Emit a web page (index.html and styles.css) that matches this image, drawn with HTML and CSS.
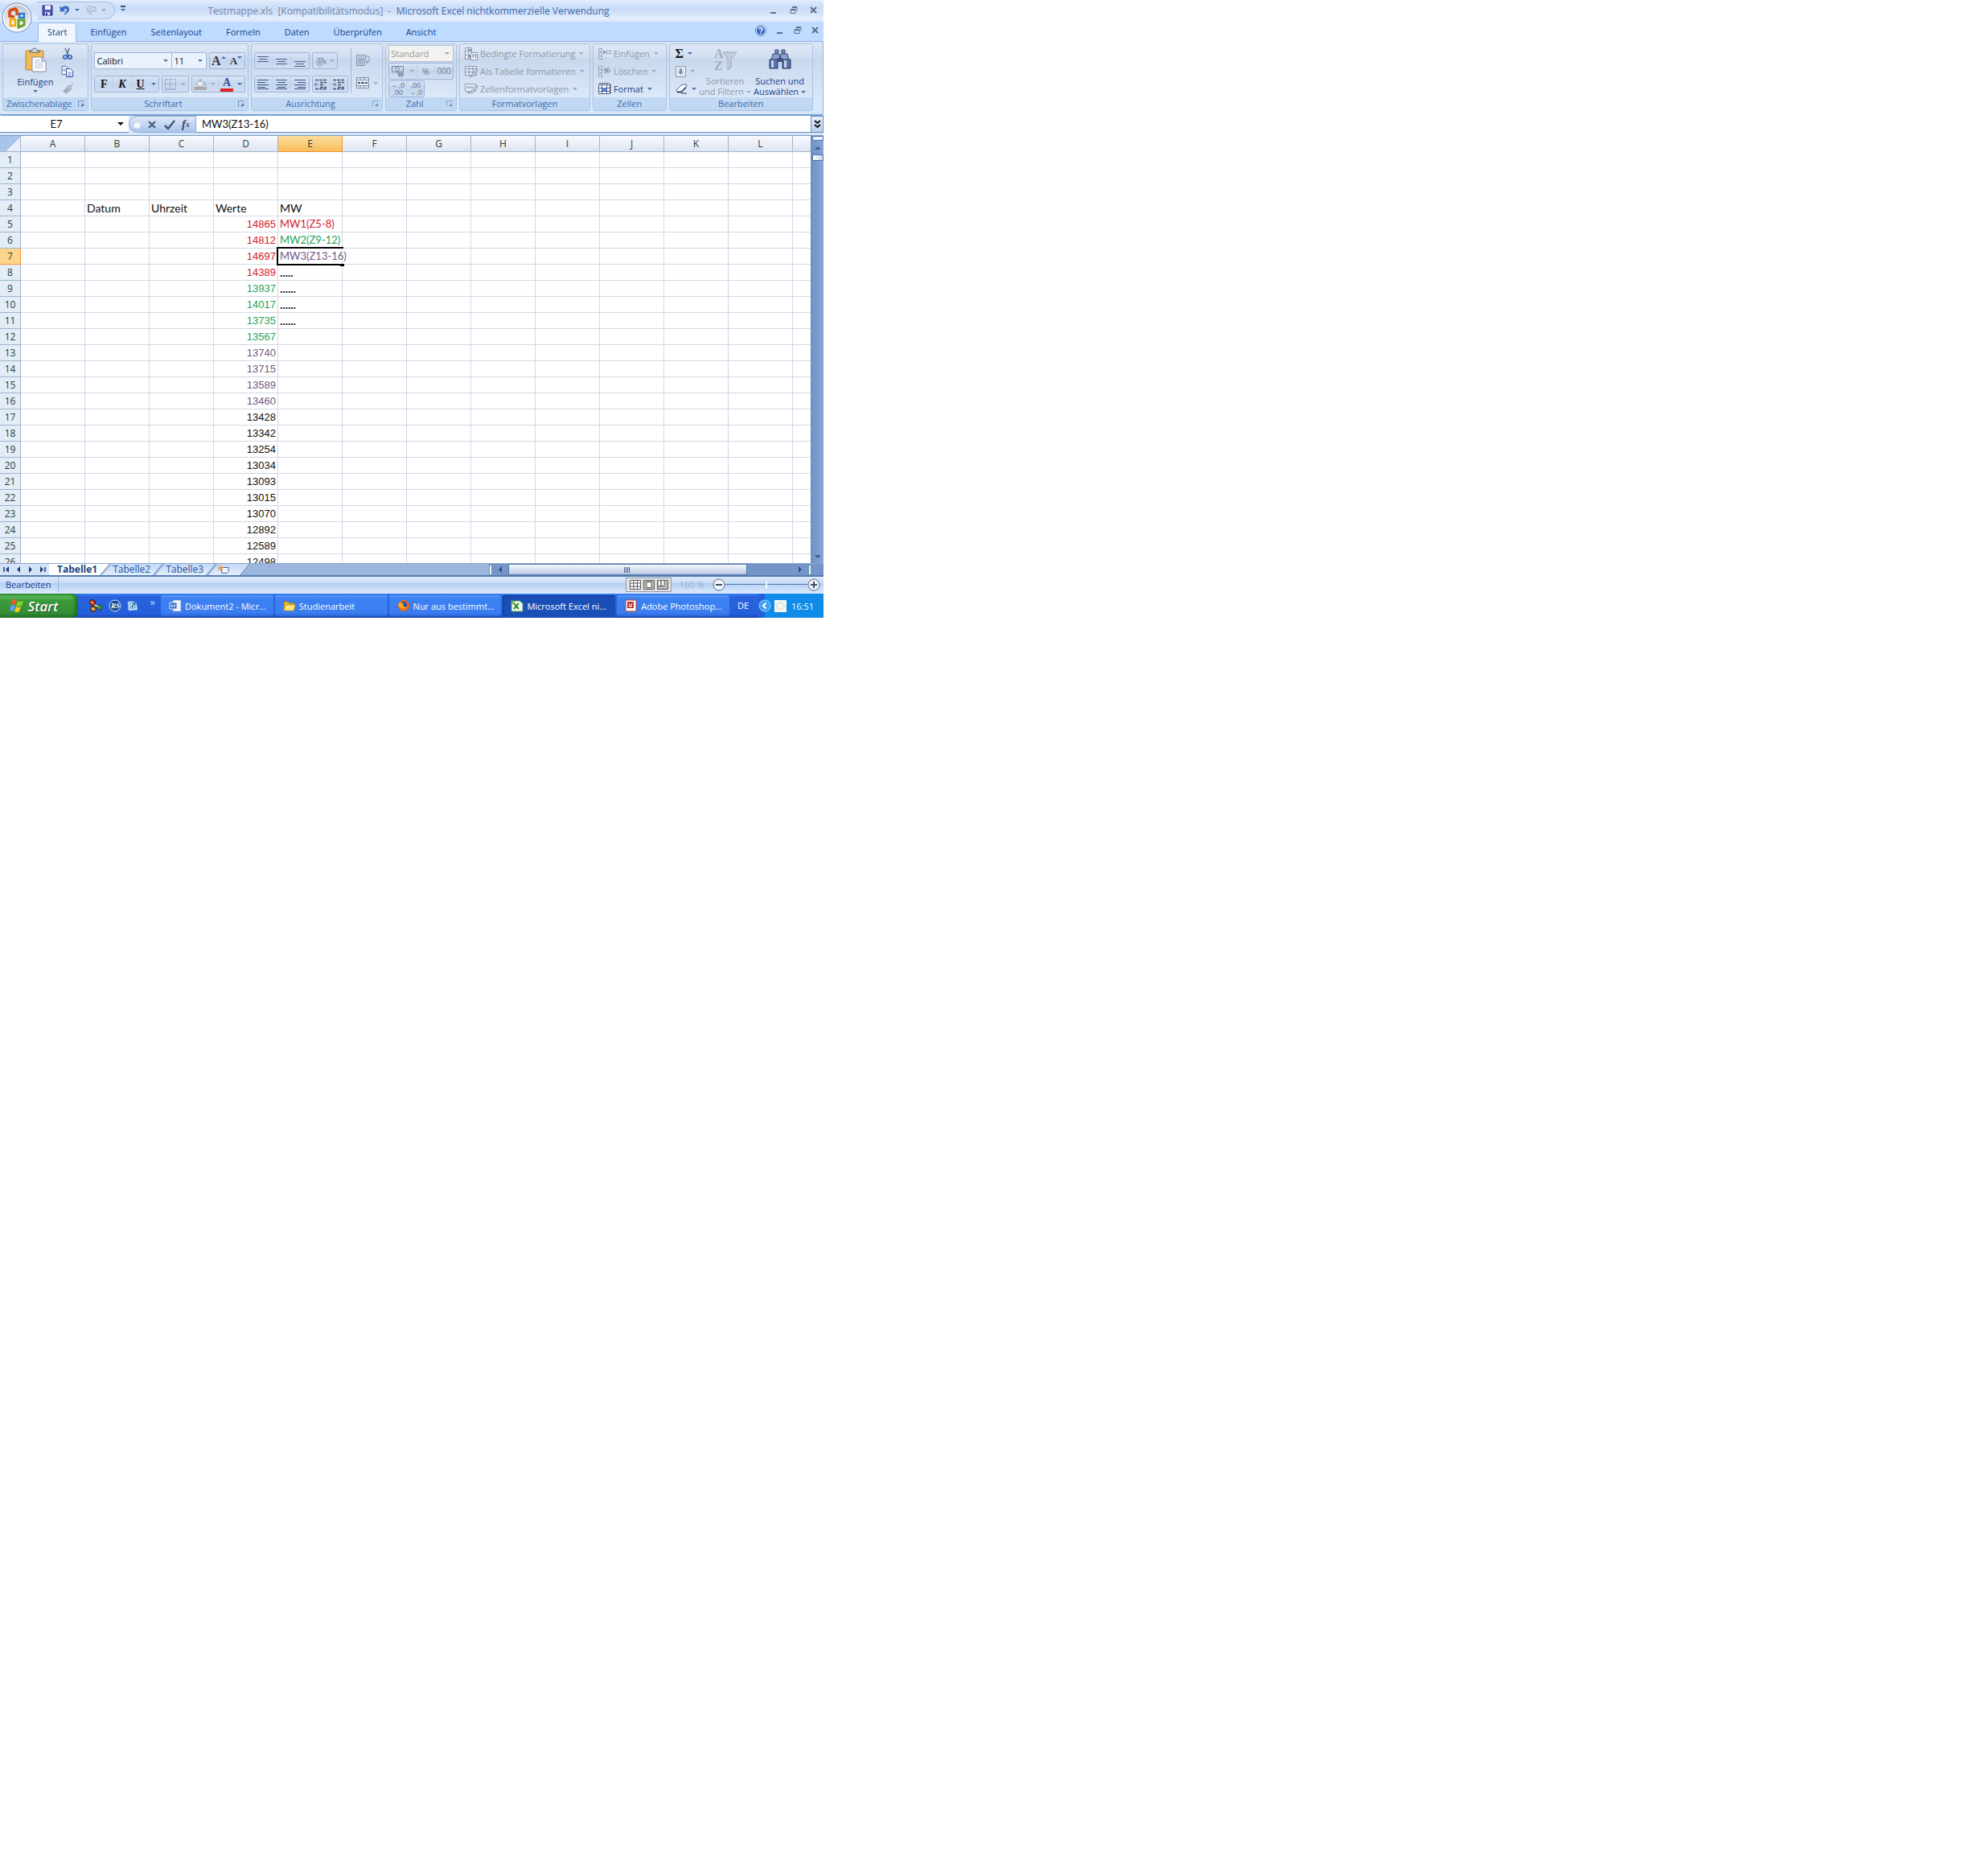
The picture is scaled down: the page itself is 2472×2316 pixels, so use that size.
FILE: index.html
```html
<!DOCTYPE html>
<html lang="de">
<head>
    <meta charset="UTF-8">
    <meta name="viewport" content="width=device-width, initial-scale=1.0">
    <title>Testmappe.xls</title>
    <link rel="stylesheet" href="styles.css">
</head>
<body>
    <div class="desktop">
        <!-- title bar -->
        <header class="titlebar">
            <button class="office" aria-label="Office">
                <svg width="38" height="38" viewBox="0 0 38 38">
                    <defs>
                        <radialGradient id="orb" cx="50%" cy="75%" r="75%">
                            <stop offset="0" stop-color="#ffffff"/>
                            <stop offset=".55" stop-color="#dfe3ea"/>
                            <stop offset="1" stop-color="#b3bccb"/>
                        </radialGradient>
                    </defs>
                    <circle cx="19" cy="19" r="18" fill="url(#orb)" stroke="#7089ad"/>
                    <circle cx="19" cy="19" r="16.5" fill="none" stroke="#fff" stroke-width="1.5"/>
                    <path d="M10 10l7-2 2 2v6M10 10v7l6 1" fill="none" stroke="#d9480f" stroke-width="3.5"/>
                    <rect x="22" y="14" width="6" height="5" fill="none" stroke="#2f7ad1" stroke-width="2.5"/>
                    <rect x="11" y="21" width="6" height="8" fill="none" stroke="#f5a800" stroke-width="2.5"/>
                    <path d="M21 22h7v6l-7 3z" fill="none" stroke="#63a52f" stroke-width="3"/>
                </svg>
            </button>
            <div class="quick">
                <button aria-label="Speichern">
                    <svg width="14" height="14"><path d="M1 1h12v12H1z" fill="#5257b5" stroke="#2b2f80"/><path d="M4 1h7v5H4z" fill="#eef2ff"/><path d="M4 9h6v4H4z" fill="#d5dcf0"/><path d="M5 10h2v3H5z" fill="#2b2f80"/></svg>
                </button>
                <button aria-label="Rückgängig">
                    <svg width="13" height="13"><path d="M1 2v6h6L5 6c3-3 5-1 4 2l-3 4c6-2 8-9 3-10-3-1-5 1-6 2z" fill="#3a6fd0" stroke="#2a54a8" stroke-width=".6"/></svg>
                    <i class="arrow"></i>
                </button>
                <button aria-label="Wiederholen">
                    <svg width="13" height="13"><path d="M12 2v6H6l2-2C5 3 3 5 4 8l3 4C1 10-1 3 4 2c3-1 5 1 6 2z" fill="#cfdaec" stroke="#92a3bf" stroke-width=".8"/></svg>
                    <i class="arrow dim"></i>
                </button>
            </div>
            <button class="more" aria-label="Symbolleiste anpassen"><i class="arrow barred"></i></button>
            <h1 class="title"><span>Testmappe.xls&nbsp; [Kompatibilitätsmodus]&nbsp; -</span>&nbsp; Microsoft Excel nichtkommerzielle Verwendung</h1>
            <div class="winbtns">
                <button aria-label="Minimieren"><svg width="10" height="10"><path d="M1 8h7" stroke="#5b6f8c" stroke-width="2"/></svg></button>
                <button aria-label="Verkleinern"><svg width="10" height="10"><path d="M3 1.5h6v4M1 4.5h6v4H1z" fill="none" stroke="#5b6f8c"/><path d="M1 4h6M3 1h6" stroke="#5b6f8c" stroke-width="2"/></svg></button>
                <button aria-label="Schließen"><svg width="10" height="10"><path d="M1 1l7 7M8 1l-7 7" stroke="#5b6f8c" stroke-width="2"/></svg></button>
            </div>
        </header>

        <nav class="tabs">
            <a href="#" class="active">Start</a>
            <a href="#">Einfügen</a>
            <a href="#">Seitenlayout</a>
            <a href="#">Formeln</a>
            <a href="#">Daten</a>
            <a href="#">Überprüfen</a>
            <a href="#">Ansicht</a>
            <div class="docbtns">
                <button aria-label="Hilfe"><svg width="14" height="14"><circle cx="7" cy="7" r="6" fill="#2f66c8" stroke="#f0f6ff" stroke-width="1.5"/><circle cx="7" cy="7" r="6.6" fill="none" stroke="#2b559c" stroke-width=".7"/><path d="M5 5.5c0-2.500 4-2.500 4 0 0 1.300-2 1.300-2 2.700M7 9.500v1.500" fill="none" stroke="#fff" stroke-width="1.5"/></svg></button>
                <button aria-label="Fenster minimieren"><svg width="10" height="10"><path d="M1 8h7" stroke="#5b6f8c" stroke-width="2"/></svg></button>
                <button aria-label="Fenster verkleinern"><svg width="10" height="10"><path d="M3 1.5h6v4M1 4.5h6v4H1z" fill="none" stroke="#5b6f8c"/><path d="M1 4h6M3 1h6" stroke="#5b6f8c" stroke-width="2"/></svg></button>
                <button aria-label="Fenster schließen"><svg width="10" height="10"><path d="M1 1l7 7M8 1l-7 7" stroke="#5b6f8c" stroke-width="2"/></svg></button>
            </div>
        </nav>

        <!-- ribbon -->
        <div class="ribbon">
            <section class="group clip">
                <div class="body">
                    <button class="big">
                        <svg width="28" height="31"><rect x="2" y="4" width="22" height="24" rx="1" fill="#f0b95a" stroke="#b98431"/><path d="M7 6V4h3c0-4 6-4 6 0h3v2z" fill="#d9dde3" stroke="#59606c"/><path d="M10 12h12l5 5v13H10z" fill="#fff" stroke="#7b8aa5"/><path d="M13 16h7M13 19h11M13 22h11M13 25h11" stroke="#9fb0cc"/><path d="M22 12v5h5" fill="#dce5f5" stroke="#7b8aa5"/></svg>
                        <span>Einfügen</span>
                        <i class="arrow"></i>
                    </button>
                    <div class="stack">
                        <button aria-label="Ausschneiden"><svg width="14" height="15"><path d="M4 0l4 9M9 0L6 9" stroke="#5a6f95" stroke-width="1.5"/><circle cx="4" cy="11" r="2.2" fill="none" stroke="#2f5fb5" stroke-width="1.6"/><circle cx="10" cy="11" r="2.2" fill="none" stroke="#2f5fb5" stroke-width="1.6"/></svg></button>
                        <button aria-label="Kopieren"><svg width="16" height="14"><path d="M1 .5h5l3 3v7H1z" fill="#fff" stroke="#4a66a8"/><path d="M6.5 3.5h5l3 3v7h-8z" fill="#fff" stroke="#2f4f9c"/><path d="M8 8h5M8 10h5M8 12h5M2 4h4M2 6h4" stroke="#6d8bcb"/></svg></button>
                        <button aria-label="Format übertragen"><svg width="16" height="15"><path d="M15 1l-4 3-2-1-2 3 4 4 2-3-1-2z" fill="#b5bcc8" stroke="#8f99aa" stroke-width=".6"/><path d="M7 6l4 4-5 4-4-4z" fill="#a5adba"/></svg></button>
                    </div>
                </div>
                <h2>Zwischenablage<button class="launch" aria-label="Zwischenablage öffnen"></button></h2>
            </section>

            <section class="group font">
                <div class="body rows">
                    <div class="line">
                        <label class="pick name"><select aria-label="Schriftart"><option>Calibri</option></select><i class="arrow"></i></label>
                        <label class="pick size"><select aria-label="Schriftgrad"><option>11</option></select><i class="arrow"></i></label>
                        <div class="set last">
                            <button class="serif grow-a" aria-label="Schrift vergrößern">A<i class="arrow up"></i></button>
                            <button class="serif shrink-a" aria-label="Schrift verkleinern">A<i class="arrow"></i></button>
                        </div>
                    </div>
                    <div class="line">
                        <div class="set fku">
                            <button class="serif">F</button>
                            <button class="serif italic">K</button>
                            <button class="serif under">U</button>
                            <button class="drop" aria-label="Unterstreichen"><i class="arrow"></i></button>
                        </div>
                        <div class="set">
                            <button aria-label="Rahmen"><svg width="14" height="14"><path d="M1 .5h13M1 6.5h13M.5 0v14M6.5 0v14M13.5 0v14" stroke="#7e93b8" stroke-dasharray="1 1"/><path d="M0 13h14" stroke="#7e93b8"/></svg></button>
                            <button class="drop" aria-label="Rahmenart"><i class="arrow dim"></i></button>
                        </div>
                        <div class="set last">
                            <button aria-label="Füllfarbe"><svg width="16" height="16"><path d="M3 7l5-5 5 5-5 4z" fill="#eef2f8" stroke="#8f9bb0"/><path d="M8 5V1M12 6c3 0 3 2 3 4" fill="none" stroke="#8f9bb0"/><path d="M0 11h16v4H0z" fill="#aba9a4"/></svg></button>
                            <button class="drop" aria-label="Füllfarbe wählen"><i class="arrow dim"></i></button>
                            <button class="serif color-a" aria-label="Schriftfarbe">A</button>
                            <button class="drop" aria-label="Schriftfarbe wählen"><i class="arrow"></i></button>
                        </div>
                    </div>
                </div>
                <h2>Schriftart<button class="launch" aria-label="Schriftart öffnen"></button></h2>
            </section>

            <section class="group align">
                <div class="body">
                    <div class="rows">
                        <div class="line">
                            <div class="set three">
                                <button aria-label="Oben"><svg width="14" height="14"><path d="M0 1.5h14M2 4.5h10M0 7.5h14" stroke="#4b5f8a"/></svg></button>
                                <button aria-label="Mitte"><svg width="14" height="14"><path d="M0 4.5h14M2 7.5h10M0 10.5h14" stroke="#4b5f8a"/></svg></button>
                                <button aria-label="Unten"><svg width="14" height="14"><path d="M0 7.5h14M2 10.5h10M0 13.5h14" stroke="#4b5f8a"/></svg></button>
                            </div>
                            <div class="set turn">
                                <button aria-label="Ausrichtung"><svg width="16" height="14"><text x="1" y="11" transform="rotate(-40 5 9)" class="ab">ab</text><path d="M5 14l8-7M9 6l4 1v4" fill="none" stroke="#7f8fab"/></svg><i class="arrow dim"></i></button>
                            </div>
                        </div>
                        <div class="line">
                            <div class="set three">
                                <button aria-label="Linksbündig"><svg width="14" height="14"><path d="M0 1.5h14M0 4.5h10M0 7.5h14M0 10.5h10M0 12.5h14" stroke="#3f5382"/></svg></button>
                                <button aria-label="Zentriert"><svg width="14" height="14"><path d="M0 1.5h14M2 4.5h10M0 7.5h14M2 10.5h10M0 12.5h14" stroke="#3f5382"/></svg></button>
                                <button aria-label="Rechtsbündig"><svg width="14" height="14"><path d="M0 1.5h14M4 4.5h10M0 7.5h14M4 10.5h10M0 12.5h14" stroke="#3f5382"/></svg></button>
                            </div>
                            <div class="set two">
                                <button aria-label="Einzug verkleinern"><svg width="16" height="14"><path d="M1 1.5h14M7 4.5h8M7 7.5h5M7 10.5h8M1 12.5h14" stroke="#46536e" stroke-width="1.5" stroke-dasharray="4 1"/><path d="M0 7h5M2.5 4.5L0 7l2.500 2.500" fill="none" stroke="#5f7198"/></svg></button>
                                <button aria-label="Einzug vergrößern"><svg width="16" height="14"><path d="M1 1.5h14M7 4.5h8M7 7.5h5M7 10.5h8M1 12.5h14" stroke="#46536e" stroke-width="1.5" stroke-dasharray="4 1"/><path d="M0 7h5M2.5 4.5L5 7l-2.500 2.500" fill="none" stroke="#5f7198"/></svg></button>
                            </div>
                        </div>
                    </div>
                    <div class="merge">
                        <button aria-label="Zeilenumbruch"><svg width="17" height="16"><path d="M.5 1.5h11v5H.5zM2 4h8M.5 8.5h10v6H.5zM2 10.5h7M2 12.5h7M12 3h4v7h-4M14 8l-2 2 2 2" fill="none" stroke="#8592aa"/></svg></button>
                        <button aria-label="Verbinden und zentrieren"><svg width="17" height="15"><path d="M.5 .5h15v13H.5zM.5 3.5h15M.5 10.5h15M5 0v3M10 0v3M5 11v3M10 11v3" fill="#eaf0f8" stroke="#7d8ca8"/><path d="M2 7h3M11 7h3M6 7h4" stroke="#46536e" stroke-width="2"/></svg><i class="arrow dim"></i></button>
                    </div>
                </div>
                <h2>Ausrichtung<button class="launch dim" aria-label="Ausrichtung öffnen"></button></h2>
            </section>

            <section class="group number">
                <div class="body">
                    <label class="pick off"><select aria-label="Zahlenformat" disabled><option>Standard</option></select><i class="arrow dim"></i></label>
                    <div class="set">
                        <button aria-label="Währung"><svg width="16" height="15"><path d="M.5 1.5h14v7H.5z" fill="#c9d5e8" stroke="#7686a4"/><circle cx="7" cy="5" r="2.5" fill="none" stroke="#7686a4"/><path d="M8 8h6v2H8zM8 10h6v2H8zM9 12h5v2H9z" fill="#dbe4f1" stroke="#7686a4"/></svg></button>
                        <button class="drop" aria-label="Währung wählen"><i class="arrow dim"></i></button>
                        <button class="gray">%</button>
                        <button class="gray zeros">000</button>
                    </div>
                    <div class="set decimals">
                        <button class="dec"><span>←,0</span><span>,00</span></button>
                        <button class="dec"><span>,00</span><span>→,0</span></button>
                    </div>
                </div>
                <h2>Zahl<button class="launch dim" aria-label="Zahl öffnen"></button></h2>
            </section>

            <section class="group styles">
                <div class="body list">
                    <button disabled><svg width="16" height="16"><path d="M.5 .5h8v14h-8zM.5 4.5h8M.5 9.5h8M4.500 0v15" fill="#e9eef6" stroke="#8b98af"/><path d="M4 2h4v3H4zM4 9h3v4H4z" fill="#8b98af"/><path d="M7.5 6.5h8v9h-8z" fill="#f2f5fa" stroke="#8b98af"/><path d="M9 9h2l-1 4M12 9h2l-1 4" fill="none" stroke="#66748f"/></svg>Bedingte Formatierung<i class="arrow dim"></i></button>
                    <button disabled><svg width="16" height="16"><path d="M.5 1.5h14v11h-14zM.5 4.5h14M.5 8.5h14M5 1v11M10 1v11" fill="#e9eef6" stroke="#8b98af"/><path d="M15 4l-6 7-3 4 5-2 5-6z" fill="#c2cbda" stroke="#8b98af"/></svg>Als Tabelle formatieren<i class="arrow dim"></i></button>
                    <button disabled><svg width="16" height="16"><path d="M.5 2.5h13v9H.5z" fill="#e9eef6" stroke="#8b98af"/><path d="M2 5h9v3H2z" fill="#b6c1d3"/><path d="M15 4l-6 6-6 4 7-1 6-6z" fill="#c2cbda" stroke="#8b98af"/></svg>Zellenformatvorlagen<i class="arrow dim"></i></button>
                </div>
                <h2>Formatvorlagen</h2>
            </section>

            <section class="group cells">
                <div class="body list">
                    <button disabled><svg width="16" height="16"><path d="M.5 1.5h4v3h-4zM.5 6.5h4v3h-4zM.5 11.5h4v3h-4zM10.5 4.5h5v3h-5z" fill="#f2f5fa" stroke="#8b98af"/><path d="M6 6h4M8 4L6 6l2 2" fill="none" stroke="#66748f"/></svg>Einfügen<i class="arrow dim"></i></button>
                    <button disabled><svg width="16" height="16"><path d="M.5 1.5h4v3h-4zM.5 6.5h4v3h-4zM.5 11.5h4v3h-4z" fill="#f2f5fa" stroke="#8b98af"/><path d="M6 6h3M8 3l5 7M13 3L8 10M13 6l2 2" fill="none" stroke="#8b98af" stroke-width="1.5"/></svg>Löschen<i class="arrow dim"></i></button>
                    <button><svg width="16" height="16"><path d="M.5 3.5h14v11h-14zM.5 7.5h14M.5 11.5h14M4.5 3v12M10.5 3v12" fill="#fff" stroke="#4b5f8a"/><path d="M5 7h5v4H5z" fill="#5d86d6"/><path d="M1 1.5h13" stroke="#222" stroke-dasharray="2 1"/><path d="M15 3v12" stroke="#222" stroke-dasharray="2 1"/></svg>Format<i class="arrow"></i></button>
                </div>
                <h2>Zellen</h2>
            </section>

            <section class="group edit">
                <div class="body">
                    <div class="list tools">
                        <button class="serif sigma">Σ<i class="arrow"></i></button>
                        <button aria-label="Füllbereich"><svg width="13" height="14"><path d="M.5 .5h12v13H.5z" fill="#e6ebf3" stroke="#8b98af"/><path d="M5 3h3v4h2l-3.500 4L3 7h2z" fill="#8290a9"/></svg><i class="arrow dim"></i></button>
                        <button aria-label="Löschen"><svg width="15" height="13"><path d="M1 8l7-7h5l1 2-7 7H2z" fill="#fff" stroke="#4b5f8a"/><path d="M2 10.5h5l6-6" fill="none" stroke="#27365c" stroke-width="1.5"/><path d="M7 12h7" stroke="#27365c"/></svg><i class="arrow"></i></button>
                    </div>
                    <button class="big" disabled>
                        <svg width="30" height="30"><text x="1" y="13" class="az">A</text><text x="1" y="28" class="az">Z</text><path d="M12 6h17l-7 8v11l-4 3V14z" fill="#c5ccd8" stroke="#9ba6b8"/></svg>
                        <span>Sortieren</span>
                        <span>und Filtern<i class="arrow dim"></i></span>
                    </button>
                    <button class="big">
                        <svg width="30" height="30"><path d="M9 3h4v4H9zM17 3h4v4h-4z" fill="#7d93c4" stroke="#33436f"/><path d="M6 8h8l1 8H4zM16 8h8l2 8H15z" fill="#8ba0cd" stroke="#33436f"/><path d="M2 15h10v11H2zM18 15h10v11H18z" fill="#5b73ad" stroke="#27365c"/><path d="M4 16h3v9H4zM20 16h3v9h-3z" fill="#c4d0ea"/><path d="M12 13h6v5h-6z" fill="#41527f"/></svg>
                        <span>Suchen und</span>
                        <span>Auswählen<i class="arrow"></i></span>
                    </button>
                </div>
                <h2>Bearbeiten</h2>
            </section>
        </div>

        <!-- formula bar -->
        <div class="formula">
            <div class="namebox"><input type="text" value="E7" aria-label="Namenfeld"><i class="arrow"></i></div>
            <div class="fx">
                <i class="knob"></i>
                <button aria-label="Abbrechen"><svg width="12" height="12"><path d="M2 2l8 8M10 2l-8 8" stroke="#47566f" stroke-width="2"/></svg></button>
                <button aria-label="Eingeben"><svg width="14" height="12"><path d="M1 7l4 4 8-10" fill="none" stroke="#47566f" stroke-width="2.5"/></svg></button>
                <button class="fn">f<sub>x</sub></button>
            </div>
            <input class="content" type="text" value="MW3(Z13-16)" aria-label="Bearbeitungsleiste">
            <button class="expand" aria-label="Erweitern"><svg width="9" height="11"><path d="M1 1l3.500 3L8 1M1 6l3.500 3L8 6" fill="none" stroke="#111" stroke-width="2"/></svg></button>
        </div>

        <!-- sheet -->
        <div class="sheet">
            <div class="viewport">
                <table>
                    <thead><tr id="letters"></tr></thead>
                    <tbody id="rows"></tbody>
                </table>
            </div>
            <div class="vscroll">
                <i class="split"></i>
                <button aria-label="Nach oben"><i class="arrow up"></i></button>
                <i class="thumb"></i>
                <button class="down" aria-label="Nach unten"><i class="arrow"></i></button>
            </div>
        </div>

        <div class="sheetbar">
            <div class="steps">
                <button aria-label="Erstes Blatt"><svg width="8" height="8"><path d="M1 1v6" stroke="#1e3f7c" stroke-width="1.5"/><path d="M7 0v8L3 4z" fill="#1e3f7c"/></svg></button>
                <button aria-label="Vorheriges Blatt"><svg width="8" height="8"><path d="M6 0v8L2 4z" fill="#1e3f7c"/></svg></button>
                <button aria-label="Nächstes Blatt"><svg width="8" height="8"><path d="M2 0v8l4-4z" fill="#1e3f7c"/></svg></button>
                <button aria-label="Letztes Blatt"><svg width="8" height="8"><path d="M7 1v6" stroke="#1e3f7c" stroke-width="1.5"/><path d="M1 0v8l4-4z" fill="#1e3f7c"/></svg></button>
            </div>
            <a href="#" class="tab on">Tabelle1</a>
            <a href="#" class="tab">Tabelle2</a>
            <a href="#" class="tab">Tabelle3</a>
            <a href="#" class="tab new" aria-label="Neues Blatt"><svg width="15" height="12"><path d="M5 3.5h9v5l-2 2H6z" fill="#f2f7ff" stroke="#4a5f9e"/><path d="M4 0v8M0 4h8M1 1l6 6M7 1L1 7" stroke="#e0a03c"/></svg></a>
            <div class="hscroll">
                <i class="grip"></i>
                <button aria-label="Nach links"><i class="arrow left"></i></button>
                <div class="track"><i class="thumb"><svg width="8" height="7"><path d="M.5 0v7M2.5 0v7M4.5 0v7M6.5 0v7" stroke="#4e6591"/></svg></i></div>
                <button aria-label="Nach rechts"><i class="arrow right"></i></button>
                <i class="grip"></i>
            </div>
        </div>

        <div class="status">
            <span class="mode">Bearbeiten</span>
            <div class="views">
                <button aria-label="Normal"><svg width="14" height="12"><path d="M.5 .5h13v11H.5zM.5 4h13M.5 8h13M5 0v12M9.5 0v12" fill="#fff" stroke="#5c5c5c"/></svg></button>
                <button aria-label="Seitenlayout"><svg width="14" height="12"><path d="M.5 .5h13v11H.5z" fill="#b9b9b9" stroke="#5c5c5c"/><path d="M4 2.5h6v7H4z" fill="#fff" stroke="#5c5c5c"/></svg></button>
                <button aria-label="Seitenumbruch"><svg width="14" height="12"><path d="M.5 .5h13v11H.5z" fill="#b9b9b9" stroke="#5c5c5c"/><path d="M1 .5h4v7H1zM5 .5h4v7H5z" fill="#fff" stroke="#5c5c5c"/></svg></button>
            </div>
            <label class="percent" for="zoom">100 %</label>
            <button aria-label="Verkleinern"><svg width="16" height="16"><circle cx="8" cy="8" r="7" fill="#f1f4f9" stroke="#52698f"/><path d="M4 8h8" stroke="#3c4d6b" stroke-width="2"/></svg></button>
            <input type="range" id="zoom" min="10" max="190" value="100">
            <button aria-label="Vergrößern"><svg width="16" height="16"><circle cx="8" cy="8" r="7" fill="#f1f4f9" stroke="#52698f"/><path d="M4 8h8M8 4v8" stroke="#3c4d6b" stroke-width="2"/></svg></button>
        </div>

        <!-- taskbar -->
        <footer class="taskbar">
            <button class="start">
                <svg width="18" height="18"><path d="M3 2q3-2 6 0L7 8Q5 6 2 8z" fill="#ee5a24"/><path d="M10 3q3 2 7 0l-2 6q-4 2-7 0z" fill="#7ed321"/><path d="M1 9q3-2 6 0l-2 7q-3-2-5 0z" fill="#5c9bff"/><path d="M8 10q3 2 6 0l-2 6q-3 2-6 0z" fill="#ffc825"/></svg>
                Start
            </button>
            <div class="launcher">
                <button aria-label="Programm"><svg width="18" height="16"><circle cx="5" cy="4" r="3.5" fill="#c92a2a" stroke="#3c1f1f"/><circle cx="6" cy="12" r="3.5" fill="#a06b2c" stroke="#3c1f1f"/><circle cx="14" cy="10" r="3" fill="#3aa03a" stroke="#1c3c1f"/><path d="M3 3l3 2M4 11l4 2M7 7l5 2" stroke="#f3d36b" stroke-width="1.5"/></svg></button>
                <button aria-label="RS"><svg width="16" height="16"><circle cx="8" cy="8" r="7" fill="#174a8f" stroke="#cfe4ff"/><text x="3" y="11" class="rs">RS</text></svg></button>
                <button aria-label="Desktop anzeigen"><svg width="15" height="16"><path d="M2 3h10l2 10-11 1z" fill="#dbeeff" stroke="#6fb0ec"/><path d="M5 5h6v6H5z" fill="#fff" stroke="#287fcb"/><path d="M12 2l-5 8" stroke="#2a6f9c" stroke-width="2"/></svg></button>
                <span>»</span>
            </div>
            <div class="tasks">
                <button><svg width="16" height="16"><path d="M5 1h10v14H5z" fill="#fff" stroke="#7a93c8"/><path d="M1 4h9v8H1z" fill="#3d6cc4" stroke="#dfe9ff"/><path d="M3 6l1 4 1.500-3L7 10l1-4M11 5h3M11 8h3M11 11h3" fill="none" stroke="#c9d9f6"/></svg>Dokument2 - Micr...</button>
                <button><svg width="16" height="16"><path d="M1 3h5l2 2h6v8H1z" fill="#e9b83c" stroke="#a77b14"/><path d="M3 7h12l-2 7H1z" fill="#ffe683" stroke="#c99a28"/></svg>Studienarbeit</button>
                <button><svg width="16" height="16"><circle cx="8" cy="8" r="7" fill="#e8681c"/><circle cx="8" cy="7" r="4" fill="#2b4fa8"/><path d="M1 6c1 6 8 8 12 3-4 2-7-1-5-4-3 0-4-2-7 1z" fill="#f9a825"/></svg>Nur aus bestimmt...</button>
                <button class="pressed"><svg width="16" height="16"><path d="M1 2h10l4 3v10H1z" fill="#f4fbf2" stroke="#5c9e54"/><path d="M4 5l6 7M10 5l-6 7" stroke="#2c8a34" stroke-width="2"/><path d="M1 2h4v4H1z" fill="#78b96e"/></svg>Microsoft Excel ni...</button>
                <button><svg width="16" height="16"><path d="M1 1h13v14H1z" fill="#fff" stroke="#b33"/><path d="M3 3h8v8H3z" fill="#b92f2f"/><path d="M5 5l2 4 2-4M5 9h4" stroke="#fff" fill="none"/></svg>Adobe Photoshop...</button>
            </div>
            <span class="lang">DE</span>
            <div class="tray">
                <button aria-label="Ausgeblendete Symbole"><svg width="16" height="16"><circle cx="8" cy="8" r="7" fill="#3f9ff0" stroke="#9fd2ff"/><path d="M9.5 4.5L6 8l3.500 3.500" fill="none" stroke="#fff" stroke-width="2"/></svg></button>
                <svg width="15" height="15"><path d="M0 0h15v15H0z" fill="#f7f7f2"/><circle cx="7.5" cy="7.5" r="4.5" fill="none" stroke="#777" stroke-dasharray="1 2"/></svg>
                <time>16:51</time>
            </div>
        </footer>
    </div>
    <script src="script.js"></script>
</body>
</html>
```
FILE: styles.css
```css
*{
    box-sizing: border-box;
}

body{
    margin: 0;
    background: #fff;
    font-family: "Open Sans", "Noto Sans", sans-serif;
    font-size: 11px;
    line-height: 13px;
    color: #15428b;
}

.desktop{
    max-width: 1024px;
    background: #bfdbff;
}

button{
    border: none;
    background: none;
    padding: 0;
    margin: 0;
    font: inherit;
    color: inherit;
    display: flex;
    align-items: center;
    justify-content: center;
}

a{
    color: inherit;
    text-decoration: none;
}

h1, h2{
    margin: 0;
    font-weight: normal;
}

svg{
    display: block;
    flex: none;
    overflow: visible;
}

.arrow{
    flex: none;
    width: 0;
    height: 0;
    border: 3px solid transparent;
    border-top-color: #4a6ea8;
    border-bottom: none;
}

.arrow.dim{
    border-top-color: #9aa9c1;
}

.arrow.up{
    border-top: none;
    border-bottom: 3px solid #4a6ea8;
}

/* title bar */
.titlebar{
    position: relative;
    display: flex;
    align-items: center;
    height: 27px;
    padding: 0 7px 2px 46px;
    background: linear-gradient(#e4edfd 0, #d0e0f8 25%, #cadcf7 45%, #e3eefe 85%, #d9e8fd 100%);
}

.office{
    position: absolute;
    left: 2px;
    top: 3px;
    z-index: 2;
}

.quick{
    display: flex;
    align-items: center;
    gap: 8px;
    height: 22px;
    padding: 0 10px 0 6px;
    border: 1px solid #a9c1e6;
    border-left: none;
    border-radius: 0 11px 11px 0;
    background: #cfdff6;
}

.quick button{
    gap: 6px;
}

.more{
    width: 20px;
}

.barred{
    position: relative;
}

.barred::before{
    content: "";
    position: absolute;
    left: -3px;
    top: -7px;
    width: 6px;
    height: 2px;
    background: #2c4f8d;
}

.title{
    flex: 1;
    padding: 3px 104px 0 0;
    text-align: center;
    font-size: 12px;
    line-height: 16px;
    color: #3e6aaa;
    white-space: nowrap;
}

.title span{
    color: #7286a6;
}

.winbtns{
    display: flex;
    gap: 15px;
}

/* ribbon tabs */
.tabs{
    display: flex;
    height: 24px;
    padding: 1px 0 0 47px;
    background: #bfdbff;
}

.tabs a{
    height: 24px;
    padding: 0 15px;
    line-height: 24px;
    white-space: nowrap;
}

.tabs a.active{
    padding: 0 11px;
    margin-right: 2px;
    border: 1px solid #9dbce8;
    border-bottom: none;
    border-radius: 3px 3px 0 0;
    background: #f0f6fe;
    line-height: 22px;
    z-index: 1;
}

.docbtns{
    display: flex;
    align-items: center;
    gap: 12px;
    margin-left: auto;
    padding: 0 5px 4px 0;
}

/* ribbon */
.ribbon{
    display: flex;
    gap: 3px;
    height: 93px;
    padding: 2px 12px 4px 3px;
    border: 1px solid #8db2e3;
    border-left-width: 0;
    border-bottom: 2px solid #7ba0cf;
    border-radius: 3px;
    background: linear-gradient(#dbe6f5 0, #c9d9ee 25%, #dbe9fa 90%, #d3e5fb 100%);
}

.group{
    display: flex;
    flex-direction: column;
    border: 1px solid #a8c3e5;
    border-radius: 3px;
    background: linear-gradient(#dee8f5 0, #d2dff0 20%, #c8d8ed 21%, #dbe8f8 80%);
}

.clip{ flex: 107 1 0; }
.font{ flex: 196 1 0; }
.align{ flex: 165 1 0; }
.number{ flex: 88 1 0; }
.styles{ flex: 163 1 0; }
.cells{ flex: 91 1 0; }
.edit{ flex: 180 1 0; }

.group h2{
    display: flex;
    align-items: center;
    justify-content: center;
    height: 16px;
    font-size: 11px;
    line-height: 16px;
    color: #3e6aaa;
    background: #c1d8f3;
    position: relative;
}

.launch{
    position: absolute;
    right: 4px;
    top: 4px;
    width: 8px;
    height: 8px;
    border: 1px solid #6d8fc0;
    border-right-color: transparent;
    border-bottom-color: transparent;
}

.launch::after{
    content: "";
    position: absolute;
    right: 0;
    bottom: 0;
    border: 2px solid #4a6ea8;
    border-top-color: transparent;
    border-left-color: transparent;
}

.launch.dim{
    opacity: .7;
}

.clip h2, .align h2, .font h2, .number h2{
    padding-right: 16px;
}

.body{
    display: flex;
    flex: 1;
    min-height: 0;
}

.rows{
    display: flex;
    flex-direction: column;
    gap: 8px;
    padding: 10px 3px 0;
}

.line{
    display: flex;
    height: 21px;
    gap: 3px;
}

.big{
    flex-direction: column;
    justify-content: flex-start;
    padding-top: 4px;
    white-space: nowrap;
}

.big svg{
    margin-bottom: 5px;
}

.big span{
    display: flex;
    align-items: center;
    gap: 3px;
}

.big .arrow{
    margin-top: 2px;
}

.clip .big{
    width: 62px;
    margin-left: 9px;
}

.clip .big .arrow{
    margin-top: 4px;
}

.stack{
    display: flex;
    flex-direction: column;
    gap: 7px;
    padding-top: 5px;
    width: 18px;
}

.pick{
    position: relative;
    display: flex;
    height: 21px;
    border: 1px solid #a2b8dc;
    background: #eaf2fd;
}

.pick select{
    appearance: none;
    width: 100%;
    border: none;
    background: none;
    padding: 0 2px;
    font: inherit;
    color: #111;
    opacity: 1;
}

.pick .arrow{
    position: absolute;
    right: 4px;
    top: 8px;
}

.pick.name{
    width: 97px;
}

.pick.size{
    width: 44px;
    margin-left: -4px;
}

.pick.off{
    background: #f2f2f0;
    border-color: #b5bccb;
}

.pick.off select{
    color: #9a9a94;
}

.set{
    display: flex;
    border: 1px solid #9db4d9;
    border-radius: 2px;
    background: linear-gradient(#d8e5f5, #c4d5ed 50%, #cfdef2);
}

.set button{
    flex: 1;
    min-width: 20px;
}

.set .drop{
    flex: none;
    min-width: 12px;
}

.set button + button{
    border-left: 1px solid #c0d0e8;
}

.set .drop, .set button + .drop{
    border-left: none;
}

.set.last{
    flex: 1;
}

.serif{
    font-family: "Liberation Serif", serif;
    font-weight: bold;
    color: #111;
    font-size: 14px;
}

.set .serif .arrow{
    margin-bottom: 8px;
}

.grow-a{
    font-size: 16px;
    color: #333;
}

.shrink-a{
    font-size: 13px;
    color: #333;
}

.fku{
    width: 81px;
}

.italic{
    font-style: italic;
}

.under{
    text-decoration: underline;
}

.color-a{
    color: #2f4f9c;
    padding-bottom: 4px;
    background: linear-gradient(#d22, #d22) 50% 15px / 16px 4px no-repeat;
}

.three{
    width: 69px;
}

.two{
    width: 45px;
}

.turn{
    width: 32px;
}

.turn .arrow{
    margin-left: 2px;
}

.ab{
    font-family: "Liberation Serif", serif;
    font-size: 12px;
    fill: #6f7f9b;
}

.merge{
    display: flex;
    flex-direction: column;
    gap: 13px;
    margin: 5px 0;
    padding: 7px 0 0 6px;
    border-left: 1px solid #9db4d9;
}

.merge button{
    justify-content: flex-start;
    gap: 4px;
}

.number .body{
    flex-direction: column;
    gap: 1px;
    padding: 1px 3px 0;
}

.number .set{
    height: 21px;
}

.decimals{
    width: 45px;
}

.gray{
    color: #6a7890;
}

.zeros{
    font-size: 10px;
}

.dec{
    flex-direction: column;
    font-family: "Liberation Sans", sans-serif;
    font-size: 9px;
    line-height: 9px;
    color: #66748f;
}

.list{
    display: flex;
    flex-direction: column;
    padding: 1px 6px 0;
}

.list button{
    height: 22px;
    gap: 3px;
    justify-content: flex-start;
    white-space: nowrap;
}

.list .arrow{
    margin-left: 2px;
}

button:disabled{
    color: #8d97a8;
}

.tools{
    width: 35px;
    padding: 1px 0 0 7px;
}

.tools .sigma{
    font-size: 16px;
}

.edit .big{
    width: 68px;
}

.az{
    font-family: "Liberation Serif", serif;
    font-weight: bold;
    font-size: 16px;
    fill: #a3acbc;
}

/* formula bar */
.formula{
    display: flex;
    height: 25px;
    padding-bottom: 3px;
    background: #d5e5fa;
    border-bottom: 1px solid #7f9db9;
}

.formula input{
    border: none;
    background: #fff;
    font-family: Lato, sans-serif;
    font-size: 13px;
    color: #111;
    min-width: 0;
}

.namebox{
    display: flex;
    align-items: center;
    width: 160px;
    background: #fff;
    border-bottom: 1px solid #6b8cb8;
}

.namebox input{
    width: 140px;
    text-align: center;
}

.namebox .arrow{
    border-width: 4px;
    border-bottom: none;
    border-top-color: #111;
    margin-left: 6px;
}

.fx{
    display: flex;
    align-items: center;
    justify-content: space-between;
    width: 84px;
    padding: 0 7px 0 4px;
    border: 1px solid #8fabd4;
    border-radius: 11px 0 0 11px;
    background: linear-gradient(#dfe9f8, #a9c4ec);
}

.knob{
    width: 10px;
    height: 10px;
    border-radius: 50%;
    background: radial-gradient(circle at 60% 60%, #f4f8ff 30%, #a9bcd9);
}

.fn{
    font-family: "Liberation Serif", serif;
    font-style: italic;
    font-weight: bold;
    font-size: 15px;
    color: #3d4b63;
}

.fn sub{
    font-size: 10px;
}

.formula .content{
    flex: 1;
    padding: 0 7px;
    border-bottom: 1px solid #6b8cb8;
}

.expand{
    width: 16px;
    border: 1px solid #6b8cb8;
    background: linear-gradient(#eaf2fd, #b5cdf0);
}

/* sheet */
.sheet{
    display: flex;
    height: 531px;
}

.viewport{
    flex: 1;
    min-width: 0;
    overflow: hidden;
    background: #fff;
}

table{
    width: 100%;
    table-layout: fixed;
    border-collapse: separate;
    border-spacing: 0;
}

th, td{
    width: 80px;
    height: 20px;
    padding: 0 2px;
    border-right: 1px solid #d0d7e5;
    border-bottom: 1px solid #d0d7e5;
    line-height: 19px;
    font-family: Lato, sans-serif;
    font-size: 14px;
    color: #111;
    white-space: nowrap;
}

th{
    font-family: "Open Sans", sans-serif;
    font-size: 12px;
    font-weight: normal;
    color: #27413e;
    text-align: center;
    border-color: #9eb6ce;
}

thead th{
    background: linear-gradient(#f8fafd, #dfe4f2);
}

tbody th{
    background: #e4ecf7;
}

th:first-child{
    width: 26px;
}

th:last-child, td:last-child{
    width: auto;
    border-right: none;
}

thead th.hot{
    background: linear-gradient(#fbdc9c, #f7be5c);
    border-color: #f29536;
}

tbody th.hot{
    background: #ffd58d;
    border-color: #f29536;
}

thead .corner{
    background: linear-gradient(135deg, #a9c4e9 60%, #e6eefb 60%);
}

.mean{
    font-size: 13px;
}

.value{
    text-align: right;
    font-family: "Liberation Sans", Arial, sans-serif;
    font-size: 13px;
}

.red{ color: #d2202c; }
.green{ color: #1ea45c; }
.violet{ color: #6f5a86; }

.dots{
    font-weight: bold;
}

.cursor{
    position: relative;
}

.cursor::before{
    content: "";
    position: absolute;
    left: -2px;
    top: -2px;
    right: -2px;
    bottom: -2px;
    border: 2px solid #000;
    border-right: none;
}

.cursor::after{
    content: "";
    position: absolute;
    right: -3px;
    bottom: -3px;
    width: 5px;
    height: 3px;
    background: #000;
}

.vscroll{
    display: flex;
    flex-direction: column;
    align-items: center;
    width: 16px;
    border-left: 1px solid #6b8cb8;
    background: linear-gradient(90deg, #6f93c8, #86a6d6);
}

.split{
    width: 14px;
    height: 6px;
    border: 1px solid #4f74ad;
    background: #e8f1fc;
}

.vscroll button{
    height: 17px;
}

.vscroll .arrow{
    border-width: 4px;
    border-top-color: #3e5a8c;
    border-bottom: none;
}

.vscroll .arrow.up{
    border-top: none;
    border-bottom: 4px solid #3e5a8c;
}

.vscroll .thumb{
    width: 14px;
    height: 8px;
    border: 1px solid #4f74ad;
    background: linear-gradient(90deg, #fff, #c8d3e8);
}

.vscroll .down{
    margin-top: auto;
}

/* sheet tabs and horizontal scroll */
.sheetbar{
    display: flex;
    height: 17px;
    border-bottom: 2px solid #567db1;
    border-top: 1px solid #8aa6cf;
    background: #9cb5dc;
}

.steps{
    display: flex;
    align-items: center;
    justify-content: space-around;
    width: 61px;
    background: #d3e2f7;
}

.tab{
    position: relative;
    z-index: 1;
    padding: 0 4px 0 13px;
    margin-right: 2px;
    height: 14px;
    font-size: 12px;
    line-height: 14px;
    color: #23549a;
}

.tab::before{
    content: "";
    position: absolute;
    z-index: -1;
    left: 6px;
    right: -6px;
    top: 0;
    bottom: 0;
    transform: skewX(-40deg);
    border-right: 1px solid #6b8cb8;
    background: linear-gradient(#c2d8f6, #e3eefc);
}

.tab.on{
    padding-left: 10px;
    font-weight: bold;
    color: #1e3f7c;
    background: #fff;
}

.tab.on::before{
    background: #fff;
}

.tab.new{
    padding: 1px 14px 0 11px;
}

.hscroll{
    display: flex;
    align-items: center;
    gap: 5px;
    margin-left: auto;
    width: 416px;
    padding-right: 15px;
    background: #7595c8;
}

.hscroll .grip{
    width: 4px;
    height: 13px;
    border: 1px solid #5f9bb5;
    background: #eef6fb;
}

.hscroll button{
    width: 10px;
}

.hscroll .arrow.left{
    border: 4px solid transparent;
    border-right-color: #2f4a7d;
    border-left: none;
}

.hscroll .arrow.right{
    border: 4px solid transparent;
    border-left-color: #2f4a7d;
    border-right: none;
}

.track{
    flex: 1;
    height: 14px;
}

.hscroll .thumb{
    display: flex;
    align-items: center;
    justify-content: center;
    width: 84%;
    height: 14px;
    border: 1px solid #5577ab;
    background: linear-gradient(#f5f8fd, #b9c8e2);
}

/* status bar */
.status{
    display: flex;
    align-items: center;
    height: 21px;
    padding: 0 4px 2px 0;
    background: linear-gradient(#dce9fb 0, #cadef7 35%, #b4cff2 40%, #d6e6fb 90%);
}

.mode{
    width: 73px;
    padding-left: 7px;
    line-height: 19px;
    border-right: 1px solid #93b3de;
}

.views{
    display: flex;
    margin-left: auto;
    padding: 1px 2px;
    border: 1px solid #8f9bb0;
    background: #e3e3e3;
}

.views button{
    width: 17px;
    height: 14px;
}

.percent{
    width: 51px;
    text-align: center;
    color: #9db3d2;
}

.status input{
    appearance: none;
    width: 102px;
    height: 14px;
    margin: 0;
    background: linear-gradient(#5f7fae, #5f7fae) 0 50% / 100% 1px no-repeat;
}

.status input::-webkit-slider-thumb{
    appearance: none;
    width: 2px;
    height: 8px;
    background: #f7fbff;
}

/* taskbar */
.taskbar{
    display: flex;
    height: 30px;
    color: #fff;
    background: linear-gradient(#3a80f0 0, #2a63dd 12%, #245edb 85%, #1c48ab 100%);
}

.start{
    width: 97px;
    gap: 4px;
    padding-right: 12px;
    border-radius: 0 8px 8px 0;
    background: linear-gradient(#3c9a3c 0, #5cb85a 12%, #3a9a3a 30%, #358f35 80%, #246f24 100%);
    box-shadow: inset -3px 0 4px #1f6b25;
    font-size: 17px;
    font-weight: 600;
    font-style: italic;
    text-shadow: 1px 1px 1px #1d4d1d;
}

.launcher{
    display: flex;
    align-items: center;
    justify-content: space-between;
    width: 96px;
    margin-right: 7px;
    padding-left: 13px;
}

.launcher span{
    font-size: 13px;
    padding: 0 0 9px 8px;
    color: #c5dafc;
}

.rs{
    font-family: "Liberation Serif", serif;
    font-style: italic;
    font-weight: bold;
    font-size: 9px;
    fill: #fff;
}

.tasks{
    display: flex;
    flex: 1;
    gap: 2px;
    padding: 2px 0;
}

.tasks button{
    flex: 1;
    justify-content: flex-start;
    gap: 4px;
    padding-left: 10px;
    border-radius: 3px;
    background: linear-gradient(#5b9bfa 0, #3c81f3 15%, #3a7df0 85%, #2c66d6 100%);
    white-space: nowrap;
}

.tasks .pressed{
    background: #1b4fb8;
    box-shadow: inset 1px 1px 2px #0f3580;
}

.lang{
    width: 36px;
    padding-left: 10px;
    line-height: 29px;
}

.tray{
    display: flex;
    align-items: center;
    gap: 4px;
    width: 81px;
    background: linear-gradient(90deg, #245edb 8px, #0f8bea 8px);
}

.tray time{
    margin-left: 2px;
}
```
FILE: script.js
```js
var letters = ["", "A", "B", "C", "D", "E", "F", "G", "H", "I", "J", "K", "L", ""];
var values = [14865, 14812, 14697, 14389, 13937, 14017, 13735, 13567, 13740, 13715, 13589,
    13460, 13428, 13342, 13254, 13034, 13093, 13015, 13070, 12892, 12589, 12498];

// text cells, by address
var cells = {
    B4: ["Datum", ""],
    C4: ["Uhrzeit", ""],
    D4: ["Werte", ""],
    E4: ["MW", ""],
    E5: ["MW1(Z5-8)", "mean red"],
    E6: ["MW2(Z9-12)", "mean green"],
    E7: ["MW3(Z13-16)", "mean violet cursor"],
    E8: [".....", "dots"],
    E9: ["......", "dots"],
    E10: ["......", "dots"],
    E11: ["......", "dots"]
};

// every block of four values has its own colour
var colors = ["red", "green", "violet"];
for(var i = 0;i < values.length;i++){
    cells["D" + (i + 5)] = [values[i], "value " + (colors[Math.floor(i / 4)] || "")];
}

var head = "";
for(var c = 0;c < letters.length;c++){
    var cls = c == 0 ? "corner" : (letters[c] == "E" ? "hot" : "");
    head += '<th class="' + cls + '">' + letters[c] + '</th>';
}
document.getElementById("letters").innerHTML = head;

var html = "";
for(var r = 1;r <= 26;r++){
    html += '<tr><th class="' + (r == 7 ? "hot" : "") + '">' + r + '</th>';
    for(var c = 1;c < letters.length;c++){
        var cell = cells[letters[c] + r] || ["", ""];
        html += '<td class="' + cell[1] + '">' + cell[0] + '</td>';
    }
    html += '</tr>';
}
document.getElementById("rows").innerHTML = html;
```
